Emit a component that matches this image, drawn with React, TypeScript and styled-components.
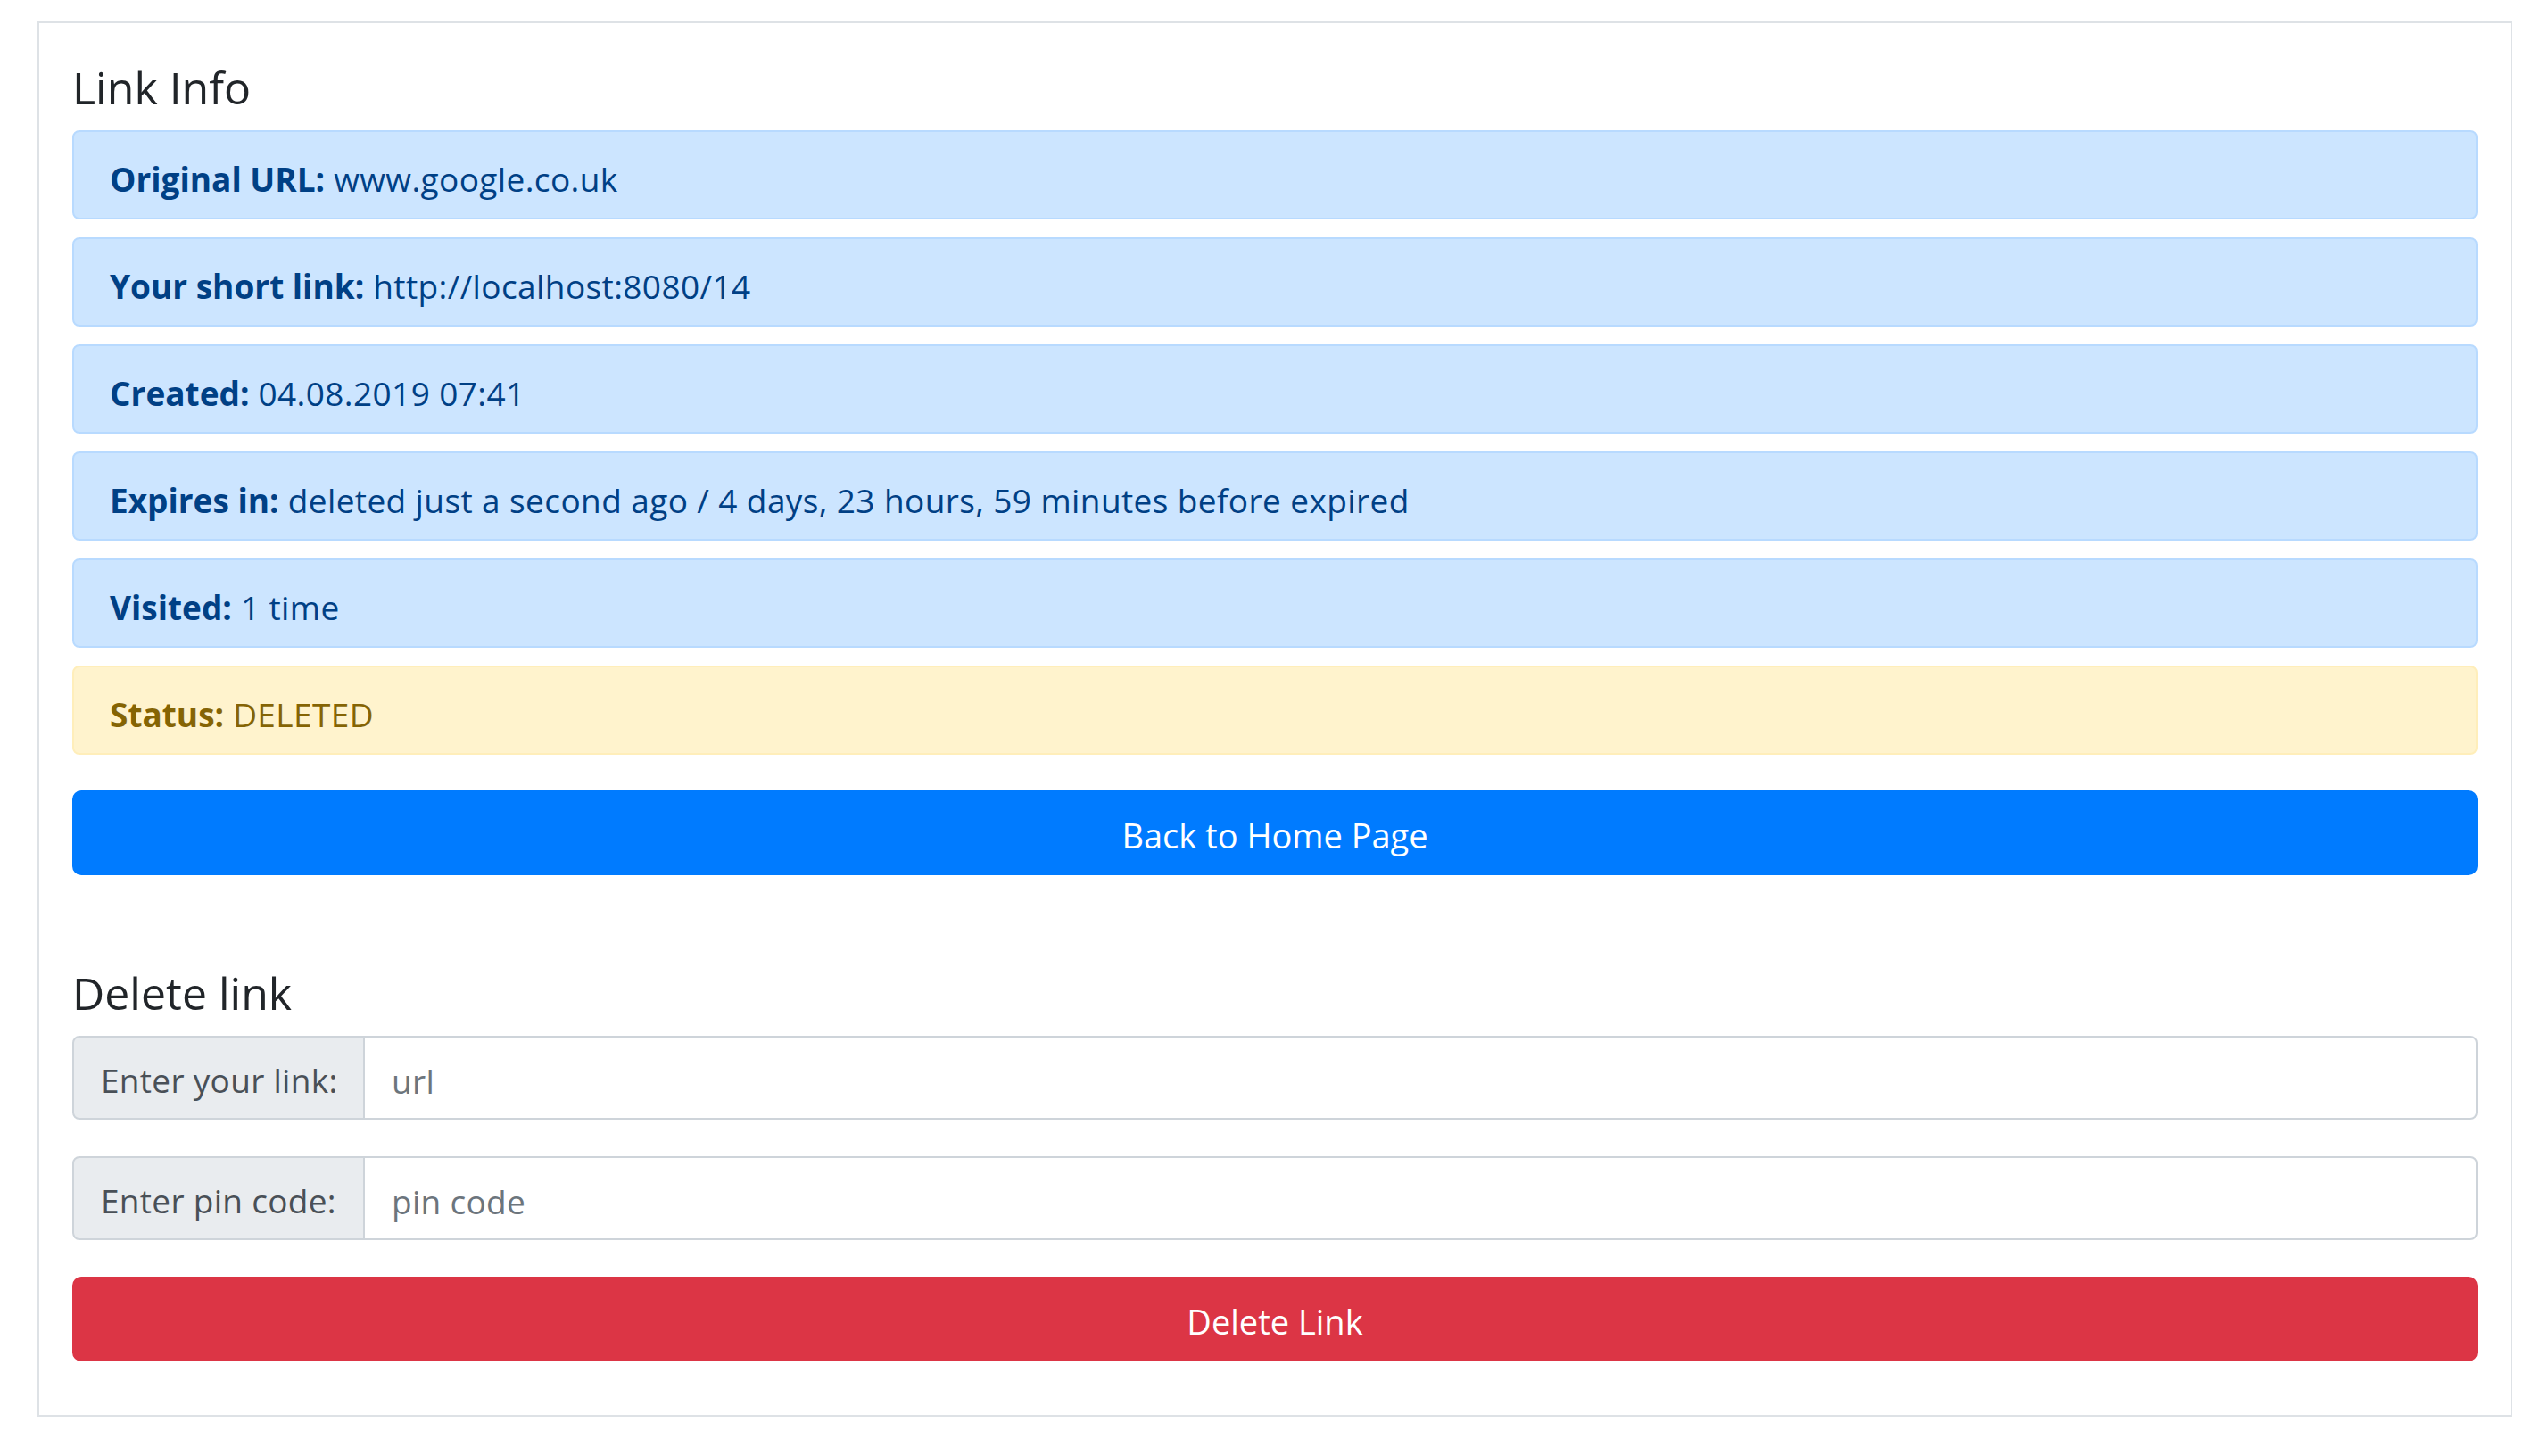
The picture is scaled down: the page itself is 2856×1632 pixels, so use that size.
import React from "react";
import styled, { createGlobalStyle } from "styled-components";

const GlobalStyle = createGlobalStyle`
  html, body {
    margin: 0;
    padding: 0;
    background: #ffffff;
  }
  body {
    font-family: "Open Sans", "Noto Sans", "Liberation Sans", sans-serif;
    font-size: 37px;
    color: #212529;
  }
  * { box-sizing: border-box; }
`;

const Page = styled.div`
  padding: 24px 40px 46px 42px;
`;

const Card = styled.section`
  border: 2px solid #dee2e6;
  padding: 44px 37px 60px 37px;
  display: flex;
  flex-direction: column;
`;

const Heading = styled.h4<{ $top?: number }>`
  margin: ${(p) => p.$top ?? 0}px 0 20px 0;
  font-size: 50px;
  line-height: 56px;
  font-weight: 400;
  color: #212529;
`;

const AlertList = styled.div`
  display: flex;
  flex-direction: column;
  gap: 20px;
`;

const Alert = styled.div<{ $variant: "primary" | "warning" }>`
  border: 2px solid ${(p) => (p.$variant === "primary" ? "#b8daff" : "#ffeeba")};
  background: ${(p) => (p.$variant === "primary" ? "#cce5ff" : "#fff3cd")};
  color: ${(p) => (p.$variant === "primary" ? "#004085" : "#856404")};
  border-radius: 8px;
  padding: 29px 40px 19px 40px;
  font-size: 37px;
  line-height: 48px;
  letter-spacing: 0.4px;
  white-space: nowrap;
`;

const Label = styled.strong`
  font-weight: 700;
  letter-spacing: 0;
`;

const Button = styled.button<{ $variant: "primary" | "danger"; $top: number }>`
  display: block;
  width: 100%;
  margin-top: ${(p) => p.$top}px;
  padding: 19px 32px 13px 32px;
  border: 2px solid ${(p) => (p.$variant === "primary" ? "#007bff" : "#dc3545")};
  background: ${(p) => (p.$variant === "primary" ? "#007bff" : "#dc3545")};
  color: #ffffff;
  border-radius: 10px;
  font-family: "Open Sans", "Noto Sans", "Liberation Sans", sans-serif;
  font-size: 38px;
  line-height: 59px;
  font-weight: 400;
  text-align: center;
  cursor: pointer;
`;

const Form = styled.form`
  display: flex;
  flex-direction: column;
  gap: 41px;
`;

const InputGroup = styled.div`
  display: flex;
  align-items: stretch;
  height: 94px;
`;

const Prepend = styled.label`
  flex: 0 0 328px;
  display: flex;
  align-items: center;
  padding: 6px 20px 0 30px;
  background: #e9ecef;
  border: 2px solid #ced4da;
  border-radius: 8px 0 0 8px;
  color: #495057;
  font-size: 37px;
  line-height: 48px;
  letter-spacing: 0.3px;
  white-space: nowrap;
`;

const Input = styled.input`
  flex: 1 1 auto;
  min-width: 0;
  margin-left: -2px;
  padding: 6px 30px 0 30px;
  border: 2px solid #ced4da;
  border-radius: 0 8px 8px 0;
  background: #ffffff;
  color: #495057;
  font-family: "Open Sans", "Noto Sans", "Liberation Sans", sans-serif;
  font-size: 37px;
  letter-spacing: 0.3px;
  outline: none;
  &::placeholder {
    color: #6c757d;
    opacity: 1;
  }
`;

const info: { label: string; value: string; variant: "primary" | "warning" }[] = [
  { label: "Original URL:", value: "www.google.co.uk", variant: "primary" },
  { label: "Your short link:", value: "http://localhost:8080/14", variant: "primary" },
  { label: "Created:", value: "04.08.2019 07:41", variant: "primary" },
  {
    label: "Expires in:",
    value: "deleted just a second ago / 4 days, 23 hours, 59 minutes before expired",
    variant: "primary",
  },
  { label: "Visited:", value: "1 time", variant: "primary" },
  { label: "Status:", value: "DELETED", variant: "warning" },
];

export default function App() {
  return (
    <>
      <GlobalStyle />
      <Page>
        <Card>
          <Heading>Link Info</Heading>
          <AlertList>
            {info.map((row) => (
              <Alert key={row.label} $variant={row.variant}>
                <Label>{row.label}</Label> {row.value}
              </Alert>
            ))}
          </AlertList>
          <Button type="button" $variant="primary" $top={40}>
            Back to Home Page
          </Button>
          <Heading $top={104}>Delete link</Heading>
          <Form onSubmit={(e) => e.preventDefault()}>
            <InputGroup>
              <Prepend htmlFor="url">Enter your link:</Prepend>
              <Input id="url" type="text" placeholder="url" />
            </InputGroup>
            <InputGroup>
              <Prepend htmlFor="pin">Enter pin code:</Prepend>
              <Input id="pin" type="text" placeholder="pin code" />
            </InputGroup>
            <Button type="submit" $variant="danger" $top={0}>
              Delete Link
            </Button>
          </Form>
        </Card>
      </Page>
    </>
  );
}
